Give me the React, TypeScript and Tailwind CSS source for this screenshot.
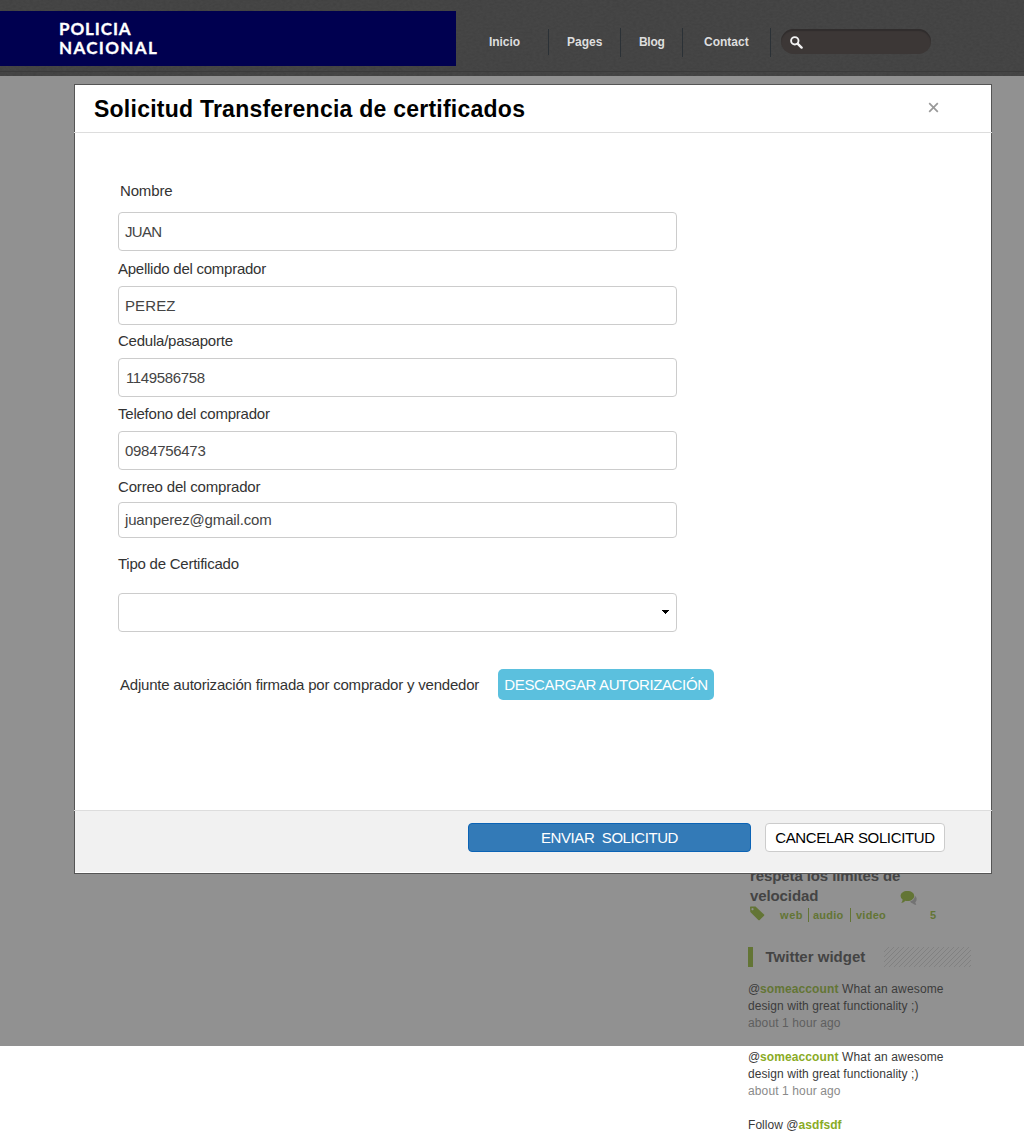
import React from 'react';

type FieldProps = {
  label: string;
  value: string;
  labelClass: string;
  boxClass: string;
  valueClass: string;
};

function Field({ label, value, labelClass, boxClass, valueClass }: FieldProps) {
  return (
    <div>
      <label className={`flex h-[22px] items-center whitespace-nowrap text-[#333] ${labelClass}`}>
        <span>{label}</span>
      </label>
      <div className={`flex w-[559px] items-center rounded-[4px] border border-[#ccc] text-[#444] ${boxClass}`}>
        <span className={valueClass}>{value}</span>
      </div>
    </div>
  );
}

function Tweet({ dim }: { dim?: boolean }) {
  return (
    <div className={`whitespace-nowrap text-[12px] leading-[17px] ${dim ? 'text-[#3c3c3c]' : 'text-[#3a3a3a]'}`}>
      <p>
        <span className="tracking-[-0.3px]">@</span>
        <b className={`tracking-[0.12px] ${dim ? 'text-[#637535]' : 'text-[#8aab25]'}`}>someaccount</b>
        <span className="tracking-[0.15px]"> What an awesome</span>
      </p>
      <p className="tracking-[0.07px]">design with great functionality ;)</p>
      <p className={`tracking-[0.12px] ${dim ? 'text-[#5f5f5f]' : 'text-[#8a8a8a]'}`}>about 1 hour ago</p>
    </div>
  );
}

function Header() {
  return (
    <header className="relative h-[76px] bg-[#464646]">
      <svg className="absolute inset-0 h-full w-full" aria-hidden="true">
        <filter id="grainDark">
          <feTurbulence type="fractalNoise" baseFrequency="0.3 0.5" numOctaves="2" seed="4" />
          <feColorMatrix type="matrix" values="0 0 0 0 0  0 0 0 0 0  0 0 0 0 0  0.5 0 0 0 -0.16" />
        </filter>
        <rect width="100%" height="100%" filter="url(#grainDark)" opacity="0.25" />
        <rect y="71" width="100%" height="1" fill="#3b3b3b" />
      </svg>
      <div className="relative flex h-full items-start">
        <div className="mt-[11px] h-[55px] w-[456px] bg-[#000050] pl-[59px] pt-[8px] font-['Lato'] text-[17px] font-bold leading-[19px] text-white [-webkit-text-stroke:0.3px_white]">
          <div className="tracking-[0.9px]">POLICIA</div>
          <div className="tracking-[1.35px]">NACIONAL</div>
        </div>
        <nav className="flex h-[84px] items-center text-[12px] font-bold text-[#dedede]">
          <a className="ml-[33px] w-[59px] tracking-[-0.05px]">Inicio</a>
          <i className="h-[26px] w-px bg-[#2b3136]" />
          <a className="ml-[18px] w-[53px]">Pages</a>
          <i className="h-[29px] w-px bg-[#2b3136]" />
          <a className="ml-[18px] w-[43px] tracking-[-0.3px]">Blog</a>
          <i className="h-[29px] w-px bg-[#2b3136]" />
          <a className="ml-[21px] w-[66px]">Contact</a>
          <i className="h-[29px] w-px bg-[#2b3136]" />
        </nav>
        <div className="ml-[10px] mt-[29px] h-[25px] w-[150px] rounded-full bg-[#3c3736] pl-[9px] pt-[7px] shadow-[inset_0_2px_1px_#302d2d]">
          <svg width="13" height="13" viewBox="0 0 13 13" fill="none" stroke="#f2f2f2">
            <circle cx="4.8" cy="4.8" r="3.7" strokeWidth="1.9" />
            <path d="M7.8 7.8L11.6 11.6" strokeWidth="2.4" strokeLinecap="round" />
          </svg>
        </div>
      </div>
    </header>
  );
}

function Dialog() {
  return (
    <section className="absolute left-[74px] top-[84px] flex h-[790px] w-[918px] flex-col border border-[#555] bg-white text-[15px]">
      <div className="-mx-px flex h-[48px] shrink-0 items-center justify-between border-b border-[#ddd] pl-[20px] pr-[53px]">
        <h1 className="whitespace-nowrap text-[23px] font-bold leading-[48px] tracking-[0.24px] text-black">
          Solicitud Transferencia de certificados
        </h1>
        <svg className="-mt-[3px]" width="11" height="11" viewBox="0 0 11 11" stroke="#999" strokeWidth="1.7">
          <path d="M1.2 1.2L9.8 9.8M9.8 1.2L1.2 9.8" />
        </svg>
      </div>

      <div className="h-[677px] shrink-0 pl-[43px] pt-[47px]">
        <Field label="Nombre" value="JUAN" labelClass="pl-[2px] tracking-[-0.15px]" boxClass="mt-[10px] h-[39px] pl-[6px] pt-[2px]" valueClass="tracking-[-0.7px]" />
        <Field label="Apellido del comprador" value="PEREZ" labelClass="mt-[7px] tracking-[-0.25px]" boxClass="mt-[6px] h-[39px] pl-[6px] pt-[2px]" valueClass="tracking-[0.1px]" />
        <Field label="Cedula/pasaporte" value="1149586758" labelClass="mt-[5px] tracking-[-0.23px]" boxClass="mt-[6px] h-[39px] pl-[7px] pt-[2px]" valueClass="tracking-[-0.37px]" />
        <Field label="Telefono del comprador" value="0984756473" labelClass="mt-[6px] tracking-[-0.23px]" boxClass="mt-[6px] h-[39px] pl-[6px] pt-[2px]" valueClass="tracking-[-0.3px]" />
        <Field label="Correo del comprador" value="juanperez@gmail.com" labelClass="mt-[6px] tracking-[-0.18px]" boxClass="mt-[4px] h-[36px] pl-[6px]" valueClass="tracking-[-0.15px]" />
        <label className="mt-[15px] flex h-[22px] items-center tracking-[-0.24px] text-[#333]">Tipo de Certificado</label>
        <div className="mt-[18px] flex h-[39px] w-[559px] items-center justify-end rounded-[4px] border border-[#ccc] pb-[2px] pr-[7px]">
          <svg width="7" height="4" viewBox="0 0 7 4" shapeRendering="crispEdges">
            <path d="M0 0H7V1H6V2H5V3H4V4H3V3H2V2H1V1H0Z" fill="#000" />
          </svg>
        </div>
        <div className="mt-[37px] flex h-[31px] items-center whitespace-nowrap">
          <span className="w-[377px] shrink-0 pl-[2px] pt-[2px] tracking-[-0.21px] text-[#333]">Adjunte autorización firmada por comprador y vendedor</span>
          <button className="ml-[3px] h-[31px] w-[216px] rounded-[5px] bg-[#5bc0de] pt-[2px] text-white tracking-[-0.37px]">
            DESCARGAR AUTORIZACIÓN
          </button>
        </div>
      </div>

      <footer className="-mx-px flex h-[62px] shrink-0 border-t border-[#ddd] px-px">
        <div className="flex h-[61px] w-full items-start bg-[#f1f1f1] pl-[393px] pt-[12px]">
          <button className="h-[29px] w-[283px] whitespace-pre rounded-[4px] border border-[#0b63b5] bg-[#337ab7] pt-[2px] tracking-[-0.42px] text-white">
            ENVIAR  SOLICITUD
          </button>
          <button className="ml-[14px] h-[29px] w-[180px] whitespace-nowrap rounded-[4px] border border-[#ccc] bg-white pt-[2px] tracking-[-0.35px] text-black">
            CANCELAR SOLICITUD
          </button>
        </div>
      </footer>
    </section>
  );
}

export default function App() {
  return (
    <div className="relative h-[1132px] w-[1024px] overflow-hidden bg-white font-['Liberation_Sans',Arial,sans-serif]">
      <Header />
      <div className="h-[970px] bg-[#919191] pl-[748px] pt-[790px]">
        <h2 className="h-[40px] whitespace-nowrap pl-[2px] text-[15px] font-bold leading-[20px] text-[#444]">
          <span className="tracking-[-0.1px]">respeta los límites de</span>
          <br />
          <span className="tracking-[-0.1px]">velocidad</span>
        </h2>
        <div className="relative flex h-[18px] items-center pl-[2px] text-[11px] font-bold text-[#637535]">
          <svg width="15" height="15" viewBox="0 0 15 15" fill="#637535" className="-mt-[3px]">
            <path fillRule="evenodd" d="M0 1.2Q0 .4 .8 .4L5.5 .6L14 8.4Q14.7 9 14 9.7L9.7 14Q9 14.5 8.3 13.9L.3 6Z M2.5 2a1.1 1.1 0 1 0 .01 0Z" />
          </svg>
          <span className="ml-[15px] w-[28px] tracking-[0.6px]">web</span>
          <i className="h-[14px] w-px bg-[#637535]" />
          <span className="ml-[4px] w-[37px] tracking-[0.2px]">audio</span>
          <i className="h-[14px] w-px bg-[#637535]" />
          <span className="ml-[5px] w-[74px] tracking-[0.25px]">video</span>
          <span>5</span>
          <svg className="absolute left-[152px] top-[-16px]" width="18" height="16" viewBox="0 0 18 16">
            <path fill="#737373" d="M10 11.5Q14.5 10.5 15 5.8Q17.5 8 16.5 10.5Q16 11.7 15.2 12.3L16.3 15Q14 14.8 12.8 13.4Q11 13.3 10 11.5Z" />
            <path fill="#637535" d="M7.4 1C11.4 1 14.2 3.1 14.2 5.9S11.4 11 7.4 11Q6.3 11 5.4 10.8Q3.9 12.9 1.3 13Q2.6 11.5 2.6 9.6Q.6 8.1 .6 5.9C.6 3.1 3.4 1 7.4 1Z" />
          </svg>
        </div>
        <div className="mt-[23px] flex h-[20px] items-center">
          <i className="h-[20px] w-[5px] bg-[#637535]" />
          <h3 className="ml-[12.5px] w-[118.5px] whitespace-nowrap text-[15px] font-bold leading-[20px] text-[#444]">Twitter widget</h3>
          <svg width="87" height="20" shapeRendering="crispEdges">
            <defs>
              <pattern id="hatch" width="5" height="5" patternUnits="userSpaceOnUse">
                <path fill="#818181" d="M4 0h1v1h-1zM3 1h1v1h-1zM2 2h1v1h-1zM1 3h1v1h-1zM0 4h1v1h-1z" />
              </pattern>
            </defs>
            <rect width="87" height="20" fill="url(#hatch)" />
          </svg>
        </div>
        <div className="mt-[14px]">
          <Tweet dim />
        </div>
      </div>
      <div className="pl-[748px] pt-[3px]">
        <Tweet />
        <p className="mt-[17px] whitespace-nowrap text-[12px] leading-[17px] text-[#3a3a3a]">
          <span className="tracking-[0.05px]">Follow @</span>
          <b className="text-[#8aab25] tracking-[0.05px]">asdfsdf</b>
        </p>
      </div>
      <Dialog />
    </div>
  );
}
